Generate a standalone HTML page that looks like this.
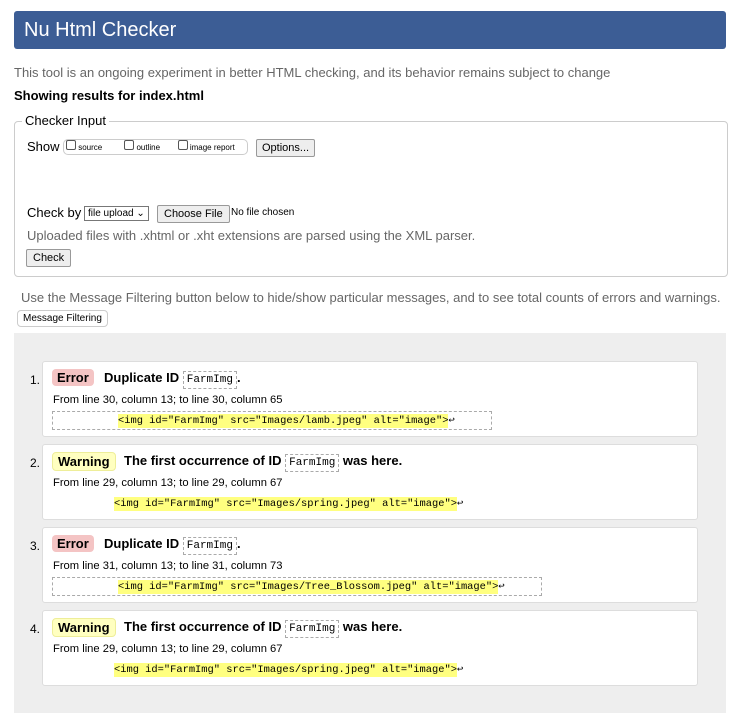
<!DOCTYPE html>
<html><head><meta charset="utf-8"><style>
body{margin:0;width:730px;height:720px;background:#fff;font-family:"Liberation Sans",Arial,sans-serif;position:relative;overflow:hidden;color:#000}
.a{position:absolute;white-space:nowrap}
.hdr{left:14px;top:11px;width:712px;height:38px;background:#3c5d95;border-radius:3px}
.hdr span{position:absolute;left:10px;top:8px;color:#fff;font-size:20px}
.gray{color:#666}
.fs{left:14px;top:121px;width:712px;height:154px;border:1px solid #ccc;border-radius:4px}
.btn{border:1px solid #999;border-radius:2px;background:#eee;font-size:11px;padding:2px 6px}
.cb{display:inline-block;width:8px;height:8px;border:1px solid #555;border-radius:2px;vertical-align:0px;margin-right:2px;background:#fff}
.item{left:42px;width:654px;height:74px;background:#fff;border:1px solid #ddd;border-radius:3px}
.num{font-size:12px;left:30px}
.tag{font-size:13px;font-weight:bold;padding:1px 5px;border-radius:4px}
.err{background:#f4c4c4}
.warn{background:#ffffc0;border:1px solid #ee9}
.t{font-size:13px;font-weight:bold}
.id{font-family:"Liberation Mono",monospace;font-weight:normal;font-size:11px;border:1px dashed #aaa;padding:2px 3px}
.loc{font-size:11.2px}
.code{font-family:"Liberation Mono",monospace;font-size:10.4px}
.code b{font-weight:normal;background:#ffff80;padding:1px 0}
.cbox{border:1px dashed #aaa;height:17px}
</style></head><body>
<div class="a hdr"><span>Nu Html Checker</span></div>
<div class="a gray" style="left:14px;top:65px;font-size:13px">This tool is an ongoing experiment in better HTML checking, and its behavior remains subject to change</div>
<div class="a" style="left:14px;top:88px;font-size:13px;font-weight:bold">Showing results for index.html</div>
<div class="a fs"></div>
<div class="a" style="left:22px;top:113px;background:#fff;padding:0 3px;font-size:13px">Checker Input</div>
<div class="a" style="left:27px;top:139px;font-size:13px">Show</div>
<div class="a" style="left:63px;top:139px;width:183px;height:14px;border:1px solid #ccc;border-radius:5px;font-size:8px;line-height:14px">&nbsp;<span class="cb"></span>source&nbsp;&nbsp;&nbsp;&nbsp;&nbsp;&nbsp;&nbsp;&nbsp;&nbsp;&nbsp;<span class="cb"></span>outline&nbsp;&nbsp;&nbsp;&nbsp;&nbsp;&nbsp;&nbsp;&nbsp;<span class="cb"></span>image report</div>
<div class="a btn" style="left:256px;top:139px;font-size:11px;padding:2px 5px">Options...</div>
<div class="a" style="left:27px;top:205px;font-size:13px">Check by</div>
<div class="a" style="left:84px;top:206px;font-size:10px;border:1px solid #777;padding:1px 3px">file upload ⌄</div>
<div class="a btn" style="left:157px;top:205px;font-size:11px;padding:2px 6px">Choose File</div>
<div class="a" style="left:231px;top:207px;font-size:10px">No file chosen</div>
<div class="a gray" style="left:27px;top:228px;font-size:13px">Uploaded files with .xhtml or .xht extensions are parsed using the XML parser.</div>
<div class="a btn" style="left:26px;top:249px;font-size:11px;padding:2px 6px">Check</div>
<div class="a gray" style="left:21px;top:290px;font-size:13px">Use the Message Filtering button below to hide/show particular messages, and to see total counts of errors and warnings.</div>
<div class="a" style="left:17px;top:310px;font-size:10px;border:1px solid #ccc;border-radius:4px;padding:2px 5px;background:#fff">Message Filtering</div>
<div class="a" style="left:14px;top:333px;width:712px;height:380px;background:#eee"></div>

<div class="a item" style="top:361px"></div>
<div class="a num" style="top:373px">1.</div>
<div class="a tag err" style="left:52px;top:369px">Error</div>
<div class="a t" style="left:104px;top:370px">Duplicate ID <span class="id">FarmImg</span>.</div>
<div class="a loc" style="left:53px;top:394px">From line 30, column 13; to line 30, column 65</div>
<div class="a cbox" style="left:52px;top:411px;width:438px"></div>
<div class="a code" style="left:118px;top:414px"><b>&lt;img id="FarmImg" src="Images/lamb.jpeg" alt="image"&gt;</b>↩</div>

<div class="a item" style="top:444px"></div>
<div class="a num" style="top:456px">2.</div>
<div class="a tag warn" style="left:52px;top:452px">Warning</div>
<div class="a t" style="left:124px;top:453px">The first occurrence of ID <span class="id">FarmImg</span> was here.</div>
<div class="a loc" style="left:53px;top:477px">From line 29, column 13; to line 29, column 67</div>
<div class="a code" style="left:114px;top:497px"><b>&lt;img id="FarmImg" src="Images/spring.jpeg" alt="image"&gt;</b>↩</div>

<div class="a item" style="top:527px"></div>
<div class="a num" style="top:539px">3.</div>
<div class="a tag err" style="left:52px;top:535px">Error</div>
<div class="a t" style="left:104px;top:536px">Duplicate ID <span class="id">FarmImg</span>.</div>
<div class="a loc" style="left:53px;top:560px">From line 31, column 13; to line 31, column 73</div>
<div class="a cbox" style="left:52px;top:577px;width:488px"></div>
<div class="a code" style="left:118px;top:580px"><b>&lt;img id="FarmImg" src="Images/Tree_Blossom.jpeg" alt="image"&gt;</b>↩</div>

<div class="a item" style="top:610px"></div>
<div class="a num" style="top:622px">4.</div>
<div class="a tag warn" style="left:52px;top:618px">Warning</div>
<div class="a t" style="left:124px;top:619px">The first occurrence of ID <span class="id">FarmImg</span> was here.</div>
<div class="a loc" style="left:53px;top:643px">From line 29, column 13; to line 29, column 67</div>
<div class="a code" style="left:114px;top:663px"><b>&lt;img id="FarmImg" src="Images/spring.jpeg" alt="image"&gt;</b>↩</div>
</body></html>
